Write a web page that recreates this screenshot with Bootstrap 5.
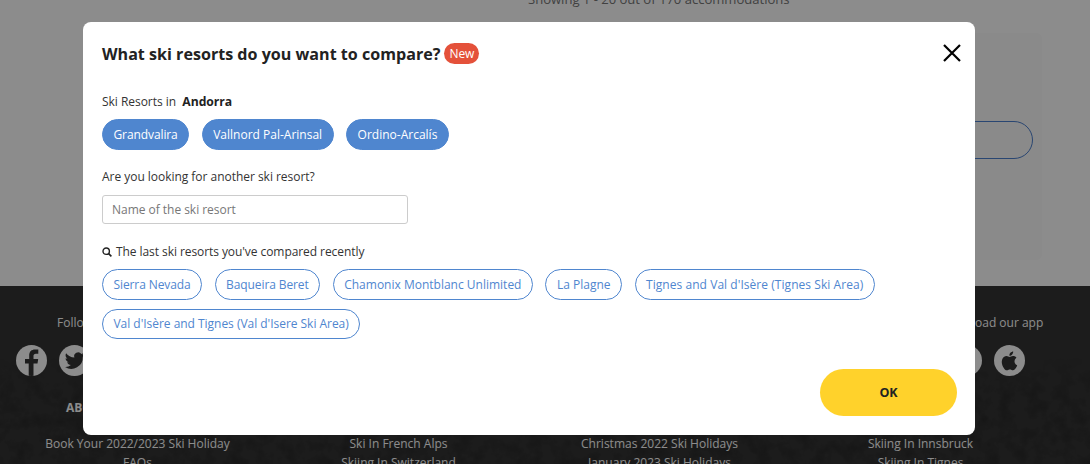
<!DOCTYPE html>
<html lang="en"><head><meta charset="utf-8">
<link href="https://cdn.jsdelivr.net/npm/bootstrap@5.3.0/dist/css/bootstrap.min.css" rel="stylesheet">
<style>
html,body{height:464px;overflow:hidden;}
body{font-family:"Open Sans",sans-serif;background:#fff;color:#333;font-size:12px;letter-spacing:-.03px;}
.page-area{height:286px;background:#fff;display:flex;flex-direction:column;}
.show-count{padding-left:528px;margin-top:-11px;font-size:13.1px;line-height:20px;color:#777;height:44px;flex:none;}
.side-panel{margin-left:860px;width:182px;height:227px;background:#fbfbfb;border-radius:6px;padding-top:88px;flex:none;}
.side-btn{height:38px;width:173px;border:1px solid #4c80cf;border-radius:19px;}
.foot-area{height:178px;background:#333;color:#fff;font-size:12px;letter-spacing:0;overflow:hidden;position:relative;}
.foot-left{padding-top:28px;padding-left:16px;}
.foot-follow{padding-left:41px;line-height:18px;}
.foot-about{padding-left:50px;margin-top:23px;line-height:18px;font-weight:700;}
.soc-row{gap:12px;margin-top:13px;}
.soc{width:31px;height:31px;border-radius:50%;background:#fff;display:block;}
.foot-links{position:absolute;top:149px;left:7px;width:1044px;line-height:18.5px;}
.foot-cell{width:261px;text-align:center;}
.foot-app{position:absolute;left:975px;top:28px;line-height:18px;}
.soc-apple{position:absolute;left:994px;top:59px;}
.soc-play{position:absolute;left:951px;top:59px;}
.grain-layer{position:absolute;top:0;left:0;}
.back-drop{position:fixed;inset:0;background:rgba(0,0,0,.45);}
.dlg{position:fixed;left:83px;top:22px;width:892px;height:413px;background:#fff;border-radius:8px;padding:21px 18px 19px 19px;}
.dlg-title{font-size:16.1px;font-weight:700;letter-spacing:0;line-height:22px;color:#222;}
.new-tag{background:#e4513a;color:#fff;font-size:12px;font-weight:400;border-radius:11px;padding:0 5px;line-height:21px;height:21px;margin-left:4px;}
.close-x{background:none;border:0;padding:0;line-height:0;margin-top:1px;margin-right:-4px;}
.lbl{line-height:17px;}
.lbl b{font-size:12.2px;color:#222;}
.lbl-andorra{margin-top:28px;}
.lbl-look{margin-top:18px;}
.lbl-last{margin-top:19px;letter-spacing:-.07px;}
.pill-a,.pill-b{border-radius:16px;font-size:12px;line-height:17px;letter-spacing:0;white-space:nowrap;text-decoration:none;}
.pill-a{background:#4f86cf;color:#fff;border:1px solid #4f86cf;padding:6px 10.5px;}
.pill-b{background:#fff;color:#4f86cf;border:1px solid #4f86cf;padding:5.75px 10.5px;}
.pill-a.snug,.pill-b.snug{letter-spacing:-.1px;}
.pill-b.roomy{letter-spacing:.05px;}
.pill-b.narrow{letter-spacing:-.03px;}
.pills-top{gap:12.5px;margin-top:9px;}
.pills-last{gap:9px 12.5px;margin-top:9px;}
.name-input{width:306px;height:29px;font-size:12px;border-radius:3px;border-color:#ccc;padding:0 9px;letter-spacing:-.03px;margin-top:10px;}
.name-input::placeholder{color:#777;opacity:1;}
.ok-btn{width:137px;height:47px;background:#ffd22b;border:0;border-radius:24px;font-size:12.5px;font-weight:700;color:#222;padding-top:8px;}
.ok-btn:hover{background:#ffd22b;color:#222;}
</style></head>
<body>
<div class="page-area">
  <div class="show-count">Showing 1 - 20 out of 170 accommodations</div>
  <div class="side-panel"><div class="side-btn"></div></div>
</div>
<footer class="foot-area">
  <svg class="grain-layer" width="1090" height="178" aria-hidden="true"><defs><filter id="grain"><feTurbulence type="fractalNoise" baseFrequency=".07" numOctaves="4" seed="4"/><feColorMatrix values="0 0 0 0 0 0 0 0 0 0 0 0 0 0 0 0 0 0 1.8 -.8"/></filter><linearGradient id="fadeG" x1="0" y1="0" x2="0" y2="1"><stop offset=".4" stop-color="#fff" stop-opacity="0"/><stop offset=".6" stop-color="#fff"/></linearGradient><mask id="fadeM"><rect width="1090" height="178" fill="url(#fadeG)"/></mask></defs><rect width="1090" height="178" filter="url(#grain)" mask="url(#fadeM)" opacity=".25"/></svg>
  <div class="foot-left position-relative">
    <div class="foot-follow">Follow us</div>
    <div class="d-flex soc-row">
      <svg class="soc" viewBox="0 0 31 31"><path fill="#333" d="M17.500 31V18.500h4l.7-4.600h-4.700v-2.800c0-1.400.6-2.300 2.400-2.300h2.400V4.600c-.8-.1-2-.2-3.300-.2-3.500 0-5.800 2.100-5.800 5.900v3.600H9v4.600h3.700V31z"/></svg>
      <svg class="soc" viewBox="0 0 31 31"><path fill="#333" d="M25.500 9.500c-.7.300-1.500.5-2.300.6.800-.5 1.500-1.300 1.800-2.200-.8.500-1.600.8-2.600 1a4 4 0 0 0-7 3.700c-3.400-.2-6.300-1.800-8.300-4.300-1.100 1.900-.5 4.200 1.300 5.400-.7 0-1.300-.2-1.800-.5 0 2 1.400 3.600 3.300 4-.6.200-1.200.2-1.800.1.500 1.600 2 2.800 3.800 2.800A8.100 8.100 0 0 1 6 22a11.500 11.500 0 0 0 17.800-10.200c.7-.6 1.300-1.300 1.700-2.300z"/></svg>
    </div>
    <div class="foot-about">ABOUT</div>
  </div>
  <div class="foot-links d-flex">
    <div class="foot-cell">Book Your 2022/2023 Ski Holiday<br>FAQs</div>
    <div class="foot-cell">Ski In French Alps<br>Skiing In Switzerland</div>
    <div class="foot-cell">Christmas 2022 Ski Holidays<br>January 2023 Ski Holidays</div>
    <div class="foot-cell">Skiing In Innsbruck<br>Skiing In Tignes</div>
  </div>
  <div class="foot-app">oad our app</div>
  <svg class="soc soc-play" viewBox="0 0 31 31"></svg>
  <svg class="soc soc-apple" viewBox="0 0 31 31"><path fill="#333" d="M20.500 16.300c0-2.300 1.900-3.400 2-3.500-1.100-1.600-2.800-1.800-3.400-1.800-1.400-.1-2.800.9-3.500.9s-1.900-.9-3.100-.9c-1.600 0-3.100.9-3.900 2.400-1.700 2.900-.4 7.200 1.200 9.500.8 1.200 1.800 2.400 3 2.400s1.700-.8 3.100-.8 1.900.8 3.100.8 2.100-1.200 2.900-2.300c.9-1.300 1.300-2.600 1.300-2.700-.1 0-2.700-1-2.700-4zM18.200 9.400c.6-.8 1.100-1.900 1-3-.9 0-2.100.6-2.800 1.400-.6.700-1.100 1.800-1 2.900 1.100.1 2.100-.5 2.800-1.300z"/></svg>
</footer>
<div class="back-drop"></div>
<div class="dlg d-flex flex-column" role="dialog">
  <div class="d-flex justify-content-between align-items-start">
    <div class="d-flex align-items-start"><h5 class="dlg-title m-0">What ski resorts do you want to compare?</h5><span class="new-tag">New</span></div>
    <button class="close-x" aria-label="Close"><svg width="18" height="18" viewBox="0 0 18 18"><path d="M1 1l16 16M17 1L1 17" stroke="#000" stroke-width="2.200" fill="none"/></svg></button>
  </div>
  <div class="lbl lbl-andorra">Ski Resorts in &nbsp;<b>Andorra</b></div>
  <div class="d-flex pills-top">
    <a class="pill-a snug">Grandvalira</a><a class="pill-a">Vallnord Pal-Arinsal</a><a class="pill-a">Ordino-Arcalís</a>
  </div>
  <div class="lbl lbl-look">Are you looking for another ski resort?</div>
  <input class="form-control name-input" placeholder="Name of the ski resort">
  <div class="lbl lbl-last d-flex align-items-center gap-1">
    <svg width="10" height="10" viewBox="0 0 10 10"><circle cx="4.200" cy="4.200" r="3.200" fill="none" stroke="#222" stroke-width="1.400"/><path d="M6.600 6.600L9.400 9.400" stroke="#222" stroke-width="1.600"/></svg>
    <span>The last ski resorts you've compared recently</span>
  </div>
  <div class="d-flex flex-wrap pills-last">
    <a class="pill-b snug">Sierra Nevada</a><a class="pill-b snug">Baqueira Beret</a><a class="pill-b">Chamonix Montblanc Unlimited</a><a class="pill-b">La Plagne</a><a class="pill-b roomy">Tignes and Val d'Isère (Tignes Ski Area)</a><a class="pill-b narrow">Val d'Isère and Tignes (Val d'Isere Ski Area)</a>
  </div>
  <div class="mt-auto text-end"><button class="btn ok-btn">OK</button></div>
</div>
<script src="https://cdn.jsdelivr.net/npm/bootstrap@5.3.0/dist/js/bootstrap.bundle.min.js"></script>
</body></html>
